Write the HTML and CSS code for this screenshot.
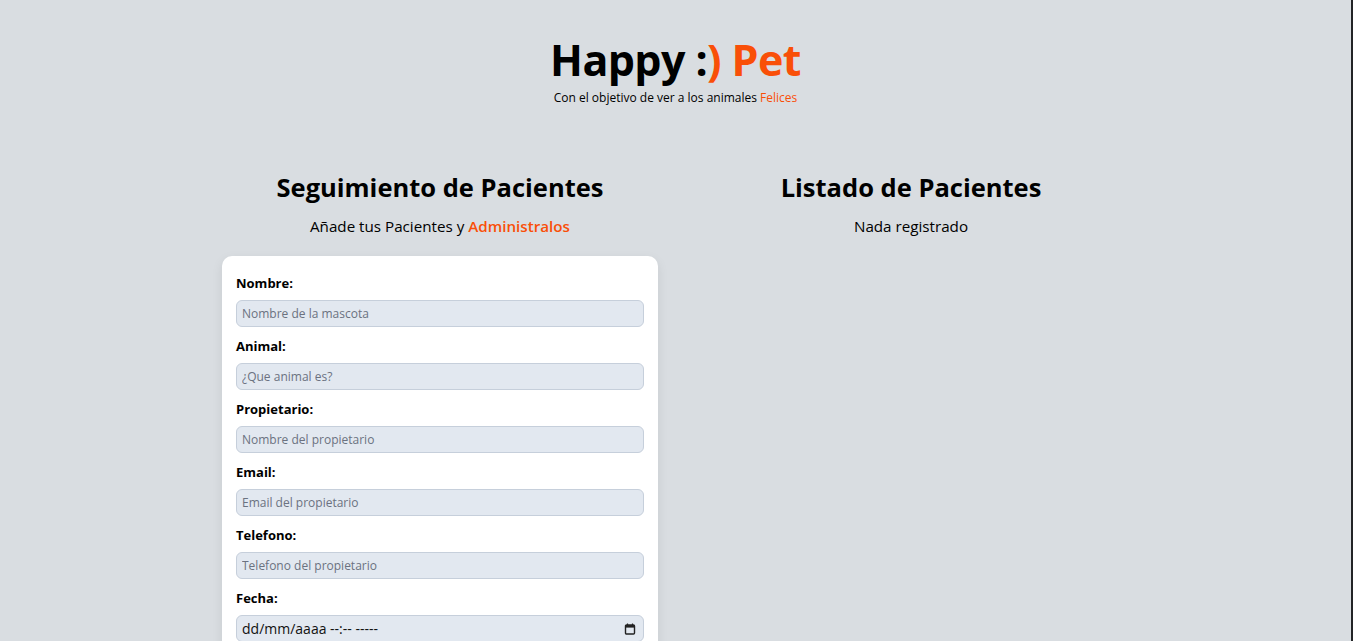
FILE: index.html
```html
<!DOCTYPE html>
<html lang="es">
<head>
<meta charset="utf-8">
<title>Happy :) Pet</title>
<link rel="stylesheet" href="styles.css">
</head>
<body>
<div class="page">
  <header class="header">
    <h1 class="title">Happy :<span class="accent">) Pet</span></h1>
    <p class="subtitle">Con el objetivo de ver a los animales <span class="accent">Felices</span></p>
  </header>
  <main class="main">
    <section class="col">
      <h2 class="col-title">Seguimiento de Pacientes</h2>
      <p class="col-sub">Añade tus Pacientes y <span class="accent strong">Administralos</span></p>
      <form class="card">
        <div class="field">
          <label class="label" for="nombre">Nombre:</label>
          <input class="input" id="nombre" type="text" placeholder="Nombre de la mascota">
        </div>
        <div class="field">
          <label class="label" for="animal">Animal:</label>
          <input class="input" id="animal" type="text" placeholder="¿Que animal es?">
        </div>
        <div class="field">
          <label class="label" for="prop">Propietario:</label>
          <input class="input" id="prop" type="text" placeholder="Nombre del propietario">
        </div>
        <div class="field">
          <label class="label" for="email">Email:</label>
          <input class="input" id="email" type="email" placeholder="Email del propietario">
        </div>
        <div class="field">
          <label class="label" for="tel">Telefono:</label>
          <input class="input" id="tel" type="tel" placeholder="Telefono del propietario">
        </div>
        <div class="field">
          <label class="label">Fecha:</label>
          <div class="input date">
            <span class="date-text">dd/mm/aaaa <span class="dashes">--:-- -----</span></span>
            <svg class="cal" width="12" height="12" viewBox="0 0 12 12"><rect x="1.5" y="2" width="9" height="9" rx="1" fill="none" stroke="#222" stroke-width="1.4"/><rect x="1.5" y="2" width="9" height="2.6" fill="#222"/><line x1="3.5" y1="0.5" x2="3.5" y2="2.5" stroke="#222" stroke-width="1.2"/><line x1="8.5" y1="0.5" x2="8.5" y2="2.5" stroke="#222" stroke-width="1.2"/></svg>
          </div>
        </div>
      </form>
    </section>
    <section class="col">
      <h2 class="col-title">Listado de Pacientes</h2>
      <p class="col-sub">Nada registrado</p>
    </section>
  </main>
</div>
</body>
</html>
```
FILE: styles.css
```css
* { box-sizing: border-box; }
html {
  background: #d9dde1;
  border-right: 2px solid #222426;
  min-height: 100%;
}
body {
  margin: 0;
  font-family: "Open Sans", "Noto Sans", Arial, sans-serif;
  color: #000;
  background: #d9dde1;
}
.page { padding-top: 36px; }
.header { text-align: center; }
.title {
  margin: 0;
  font-size: 43px;
  line-height: 48px;
  font-weight: 700;
  letter-spacing: -0.6px;
}
.accent { color: #f94f08; }
.subtitle {
  margin: 5px 0 0;
  font-size: 12px;
  line-height: 18px;
}
.main {
  display: flex;
  justify-content: center;
  gap: 35px;
  margin-top: 64px;
}
.col { width: 436px; }
.col-title {
  margin: 0;
  text-align: center;
  font-size: 25.5px;
  line-height: 32px;
  font-weight: 700;
}
.col-sub {
  margin: 12px 0 0;
  text-align: center;
  font-size: 15.2px;
  line-height: 22px;
}
.strong { font-weight: 600; }
.card {
  margin-top: 19px;
  background: #fff;
  border-radius: 10px;
  padding: 18px 14px 20px;
  box-shadow: 0 4px 12px rgba(0,0,0,0.08);
}
.field { margin-bottom: 10px; }
.label {
  display: block;
  font-size: 13px;
  line-height: 18px;
  font-weight: 700;
  margin-bottom: 8px;
}
.input {
  display: block;
  width: 100%;
  height: 27px;
  border: 1px solid #c6cfdb;
  border-radius: 6px;
  background: #e2e8f0;
  padding: 0 5px;
  font-family: inherit;
  font-size: 12px;
  color: #111;
  outline: none;
}
.input::placeholder { color: #6b7280; }
.date {
  display: flex;
  align-items: center;
  justify-content: space-between;
  padding-right: 7px;
}
.date-text { font-size: 14px; color: #111; }
.dashes { letter-spacing: 0; }
.cal { display: block; }
```
